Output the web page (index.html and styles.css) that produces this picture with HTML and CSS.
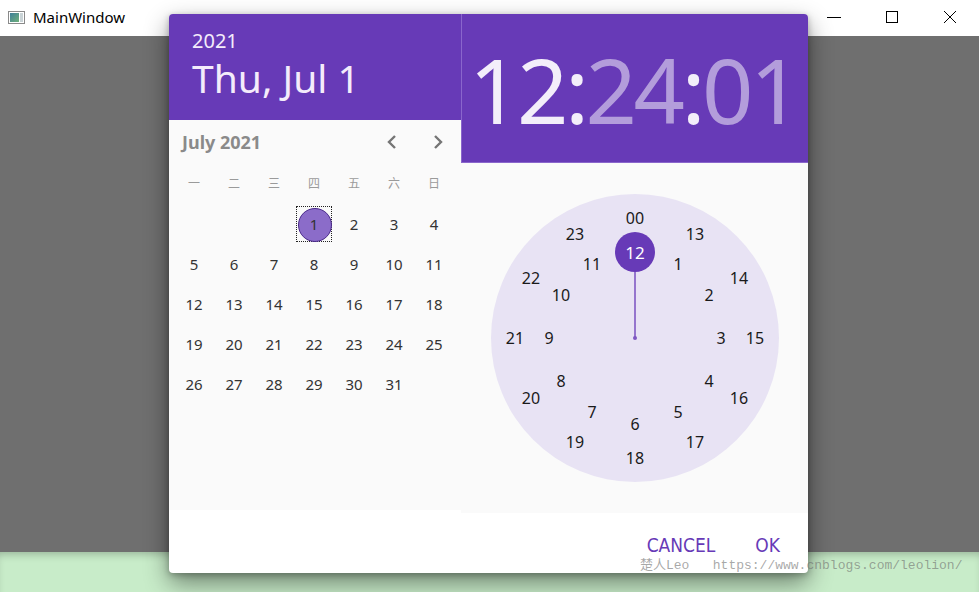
FILE: index.html
```html
<!DOCTYPE html>
<html>
<head>
<meta charset="utf-8">
<link rel="stylesheet" href="styles.css">
</head>
<body>
<div class="window">
  <div class="titlebar">
    <span class="app-icon">
      <svg width="17" height="13" viewBox="0 0 17 13">
        <rect x="0.5" y="0.5" width="16" height="12" fill="#fff" stroke="#8a8a8a"/>
        <defs><linearGradient id="g" x1="0" y1="0" x2="1" y2="1"><stop offset="0" stop-color="#3f7f9a"/><stop offset="1" stop-color="#6fb07a"/></linearGradient></defs>
        <rect x="2" y="2" width="9" height="9" fill="url(#g)"/>
        <rect x="12" y="2" width="3" height="9" fill="#c9d3d6"/>
      </svg>
    </span>
    <span class="title">MainWindow</span>
    <div class="controls">
      <span class="ctl"><svg width="16" height="16" viewBox="0 0 16 16"><line x1="1" y1="8.5" x2="15" y2="8.5" stroke="#000" stroke-width="1"/></svg></span>
      <span class="ctl"><svg width="16" height="16" viewBox="0 0 16 16"><rect x="2.5" y="2.5" width="11" height="11" fill="none" stroke="#000" stroke-width="1"/></svg></span>
      <span class="ctl"><svg width="16" height="16" viewBox="0 0 16 16"><path d="M2 2 L14 14 M14 2 L2 14" stroke="#000" stroke-width="1"/></svg></span>
    </div>
  </div>
  <div class="content">
    <div class="scrim"></div>
    <div class="green"></div>
  </div>

  <div class="dialog">
    <div class="panes">
      <div class="date-pane">
        <div class="date-header">
          <div class="year">2021</div>
          <div class="date">Thu, Jul 1</div>
        </div>
        <div class="calendar">
          <div class="cal-nav">
            <span class="month">July 2021</span>
            <span class="navs">
              <svg width="14" height="16" viewBox="0 0 14 16"><path d="M10 2 L4 8 L10 14" fill="none" stroke="#757575" stroke-width="2.4"/></svg>
              <svg width="14" height="16" viewBox="0 0 14 16"><path d="M4 2 L10 8 L4 14" fill="none" stroke="#757575" stroke-width="2.4"/></svg>
            </span>
          </div>
          <div class="grid weekdays">
            <span>一</span><span>二</span><span>三</span><span>四</span><span>五</span><span>六</span><span>日</span>
          </div>
          <div class="grid days">
            <span></span><span></span><span></span>
            <span class="sel"><i>1</i></span><span>2</span><span>3</span><span>4</span>
            <span>5</span><span>6</span><span>7</span><span>8</span><span>9</span><span>10</span><span>11</span>
            <span>12</span><span>13</span><span>14</span><span>15</span><span>16</span><span>17</span><span>18</span>
            <span>19</span><span>20</span><span>21</span><span>22</span><span>23</span><span>24</span><span>25</span>
            <span>26</span><span>27</span><span>28</span><span>29</span><span>30</span><span>31</span>
          </div>
        </div>
      </div>
      <div class="time-pane">
        <div class="time-header">
          <span class="hh">12</span><span class="colon">:</span><span class="mm">24</span><span class="colon">:</span><span class="mm">01</span>
        </div>
        <div class="clock-area">
          <svg class="clock" width="347" height="350" viewBox="0 0 347 350">
            <circle cx="174" cy="175" r="144" fill="#e8e3f4"/>
            <line x1="174" y1="175" x2="174" y2="100" stroke="#9575cd" stroke-width="2"/>
            <circle cx="174" cy="175" r="2" fill="#7e57c2"/>
            <circle cx="174" cy="89" r="20" fill="#673ab7"/>
            <g class="nums">
              <text x="174" y="55">00</text>
              <text x="234" y="71">13</text>
              <text x="278" y="115">14</text>
              <text x="294" y="175">15</text>
              <text x="278" y="235">16</text>
              <text x="234" y="279">17</text>
              <text x="174" y="295">18</text>
              <text x="114" y="279">19</text>
              <text x="70" y="235">20</text>
              <text x="54" y="175">21</text>
              <text x="70" y="115">22</text>
              <text x="114" y="71">23</text>
              <text x="174" y="89" class="selnum">12</text>
              <text x="217" y="101">1</text>
              <text x="248" y="132">2</text>
              <text x="260" y="175">3</text>
              <text x="248" y="218">4</text>
              <text x="217" y="249">5</text>
              <text x="174" y="261">6</text>
              <text x="131" y="249">7</text>
              <text x="100" y="218">8</text>
              <text x="88" y="175">9</text>
              <text x="100" y="132">10</text>
              <text x="131" y="101">11</text>
            </g>
          </svg>
        </div>
      </div>
    </div>
    <div class="footer">
      <span class="btn">CANCEL</span>
      <span class="btn">OK</span>
    </div>
  </div>
  <div class="watermark">楚人Leo   https://www.cnblogs.com/leolion/</div>
</div>
</body>
</html>
```
FILE: styles.css
```css
* { box-sizing: border-box; }
html, body { margin: 0; padding: 0; }
body {
  width: 979px;
  height: 592px;
  overflow: hidden;
  font-family: "Noto Sans", "Liberation Sans", sans-serif;
}
.window {
  position: relative;
  width: 979px;
  height: 592px;
  display: flex;
  flex-direction: column;
}
.titlebar {
  height: 36px;
  background: #fff;
  display: flex;
  align-items: center;
  padding-left: 8px;
}
.app-icon { display: flex; width: 17px; height: 13px; margin-top: -1px; }
.title {
  margin-left: 8px;
  font-size: 15px;
  color: #000;
  font-family: "Noto Sans", sans-serif;
  margin-top: -2px;
}
.controls {
  margin-left: auto;
  display: flex;
  height: 36px;
}
.ctl {
  width: 58px;
  height: 36px;
  display: flex;
  align-items: center;
  justify-content: center;
  padding-bottom: 2px;
}
.content { flex: 1; display: flex; flex-direction: column; }
.scrim { height: 516px; background: #6f6f6f; }
.green {
  flex: 1;
  background: #c8ecc9;
  box-shadow: inset 0 6px 8px -4px rgba(0,0,0,0.25);
}

.dialog {
  position: absolute;
  left: 169px;
  top: 14px;
  width: 639px;
  height: 559px;
  background: #fff;
  border-radius: 4px;
  overflow: hidden;
  box-shadow: 0 10px 24px rgba(0,0,0,0.45), 0 2px 6px rgba(0,0,0,0.25);
  display: flex;
  flex-direction: column;
}
.panes { display: flex; align-items: flex-start; }
.date-pane { width: 292px; display: flex; flex-direction: column; }
.date-header {
  height: 106px;
  background: #673ab7;
  color: #f4ecfb;
  padding: 17px 0 0 23px;
}
.year { font-size: 20px; line-height: 20px; }
.date { font-size: 39px; line-height: 54px; }
.calendar {
  height: 390px;
  background: #fafafa;
}
.cal-nav {
  height: 44px;
  display: flex;
  align-items: center;
  padding: 0 16px 0 13px;
}
.month {
  font-weight: bold;
  font-size: 18px;
  color: #8a8a8a;
}
.navs { margin-left: auto; display: flex; gap: 32px; }
.grid {
  display: grid;
  grid-template-columns: repeat(7, 40px);
  margin-left: 5px;
}
.grid span {
  display: flex;
  align-items: center;
  justify-content: center;
  height: 40px;
}
.weekdays span {
  font-family: "Noto Sans CJK SC", sans-serif;
  font-size: 12px;
  color: #9a9a9a;
  height: 40px;
  padding-bottom: 3px;
}
.days span { font-size: 15px; color: #333; }
.days .sel i {
  font-style: normal;
  width: 36px;
  height: 36px;
  border: 1px dotted #222;
  display: flex;
  align-items: center;
  justify-content: center;
  position: relative;
  z-index: 0;
}
.days .sel i::before {
  content: "";
  position: absolute;
  left: 1px; top: 1px;
  width: 32px; height: 32px;
  border-radius: 50%;
  background: #8b6cc9;
  border: 1px solid #4a2a8a;
  z-index: -1;
}

.time-pane { width: 347px; display: flex; flex-direction: column; }
.time-header {
  height: 149px;
  background: #673ab7;
  border-left: 1px solid #8a66cc;
  border-bottom: 1px solid #8a66cc;
  display: flex;
  justify-content: center;
  align-items: center;
  font-size: 90px;
  line-height: 1;
  padding-top: 2px;
  padding-right: 3px;
  letter-spacing: -3.5px;
}
.hh { color: #f3eefa; }
.colon { color: #f3eefa; }
.mm { color: #b39ddb; }
.clock-area {
  height: 350px;
  background: #fafafa;
}
.clock { display: block; }
.nums text {
  font-family: "Noto Sans", sans-serif;
  font-size: 16px;
  fill: #1a1a1a;
  text-anchor: middle;
  dominant-baseline: central;
}
.nums .selnum { fill: #fff; font-size: 17px; }

.footer {
  flex: 1;
  display: flex;
  justify-content: flex-end;
  align-items: center;
  padding-right: 28px;
  gap: 40px;
  padding-top: 4px;
}
.btn {
  font-family: "DejaVu Sans Condensed", "DejaVu Sans", sans-serif;
  font-stretch: condensed;
  font-size: 19px;
  color: #673ab7;
}
.watermark {
  position: absolute;
  left: 640px;
  top: 557px;
  font-family: "Liberation Mono", "Noto Sans CJK SC", monospace;
  font-size: 13px;
  line-height: 18px;
  color: rgba(110,110,110,0.6);
  white-space: pre;
}
```
